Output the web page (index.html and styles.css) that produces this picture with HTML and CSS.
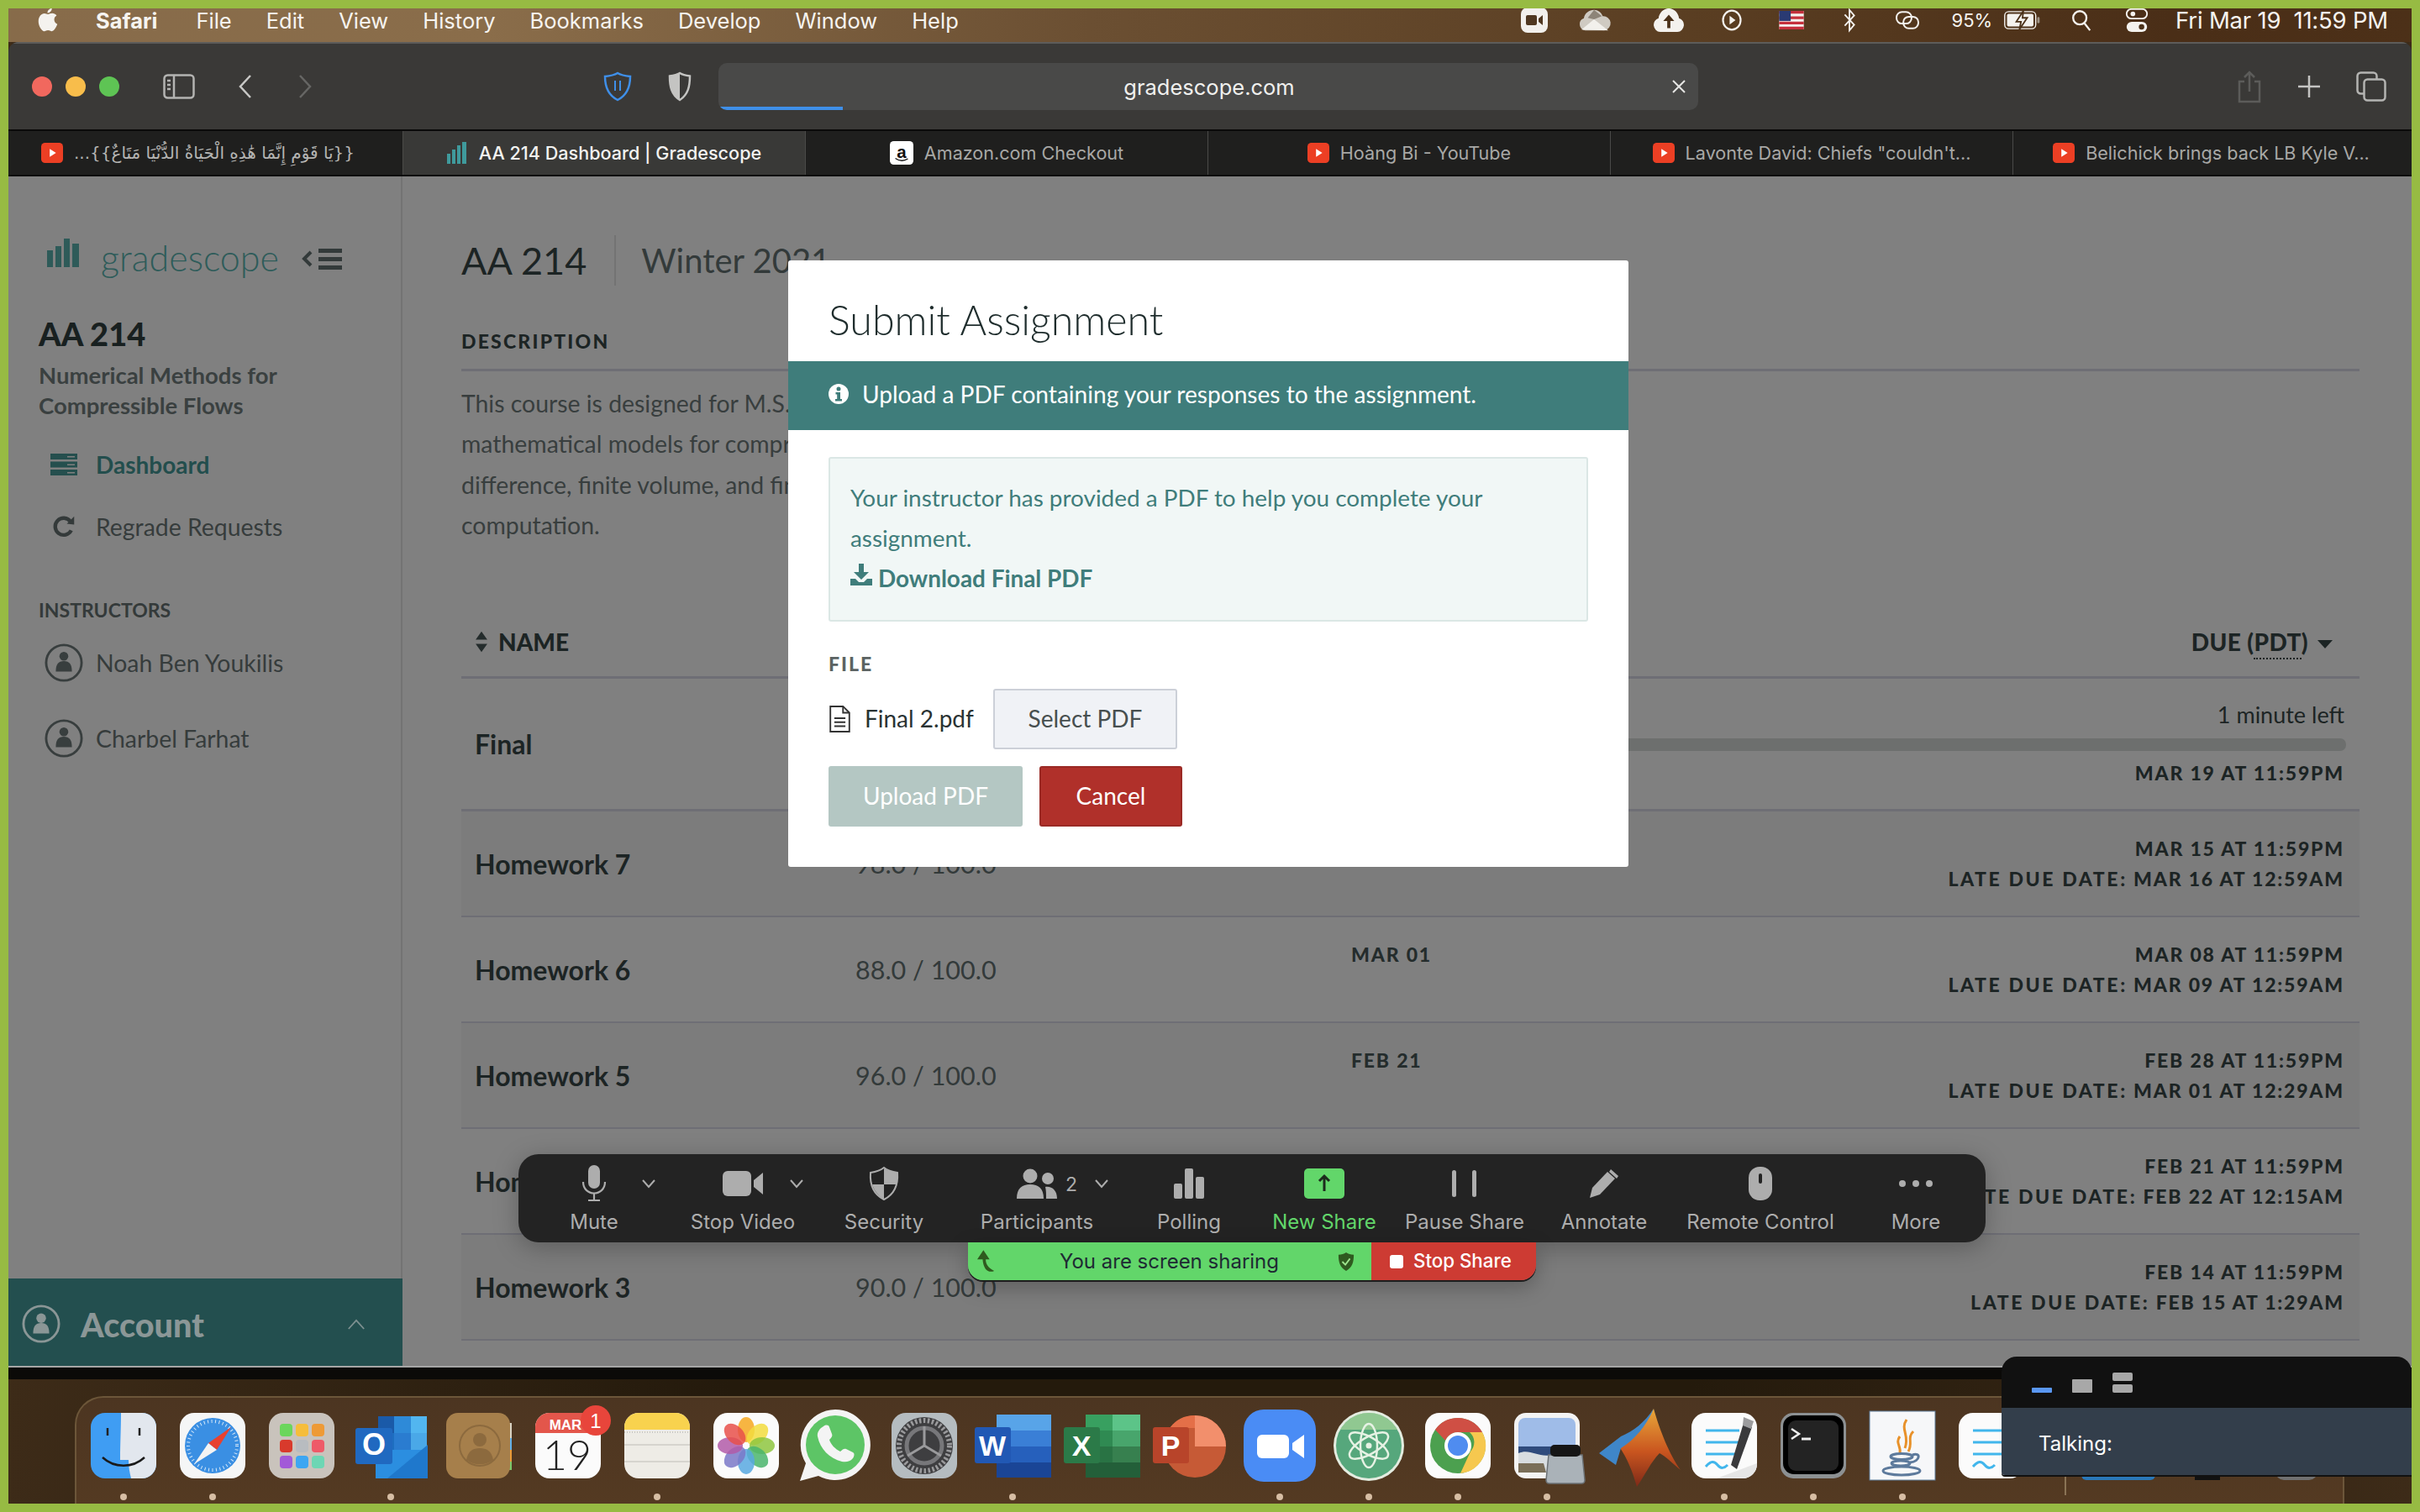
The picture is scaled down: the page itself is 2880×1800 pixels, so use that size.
FILE: index.html
```html
<!DOCTYPE html>
<html lang="en">
<head>
<meta charset="utf-8">
<title>AA 214 Dashboard | Gradescope</title>
<link rel="stylesheet" href="styles.css">
</head>
<body>
<div class="screen">
  <header class="menubar">
    <svg class="apple" viewBox="0 0 26 32"><path d="M18 1c.3 3-2.600 6.200-5.500 6-.4-3 2.700-6 5.500-6zM13 8.500c1.500 0 3-1.300 5.500-1.300 2 0 4.200 1 5.600 3-4.600 2.600-3.800 9 .9 10.900-1.200 3.200-4 8.900-7 8.900-1.800 0-2.600-1.200-4.800-1.200s-3 1.200-4.800 1.200C5 30 1 23 1 17.500c0-6 3.800-10 7.500-10 2 0 3.300 1 4.500 1z" fill="#f4f2ee"/></svg>
    <nav class="menus">
      <span class="menu-app">Safari</span><span>File</span><span>Edit</span><span>View</span><span>History</span><span>Bookmarks</span><span>Develop</span><span>Window</span><span>Help</span>
    </nav>
    <div class="status">
      <svg class="st st-zoom" viewBox="0 0 32 32"><rect width="32" height="30" y="1" rx="8" fill="#f2f0ec"/><rect x="6" y="10" width="13" height="12" rx="2" fill="#4f3720"/><path d="M21 14l5-4v12l-5-4z" fill="#4f3720"/></svg>
      <svg class="st st-cloud" viewBox="0 0 42 30"><path d="M9 28a8 8 0 0 1-2-15.500C8 6 14 2 20 2c5 0 9 3 11 8a9 9 0 0 1 2 18z" fill="#cfcac2"/><path d="M4 27L20 14l18 14z" fill="#f2f0ec"/><path d="M20 2l-8 10 8 2 10-4z" fill="#8d8478"/></svg>
      <svg class="st st-up" viewBox="0 0 42 32"><path d="M10 31a9 9 0 0 1-2-17.500C9 6 15 1 21 1s12 5 13 12.500A9 9 0 0 1 32 31z" fill="#f4f2ee"/><path d="M21 9l7 8h-5v9h-4v-9h-5z" fill="#4b3119"/></svg>
      <svg class="st st-play" viewBox="0 0 28 32"><ellipse cx="14" cy="16" rx="12" ry="13" fill="none" stroke="#f4f2ee" stroke-width="2.500"/><path d="M11 10l8 6-8 6z" fill="#f4f2ee"/></svg>
      <svg class="st st-flag" viewBox="0 0 32 24"><rect width="32" height="24" fill="#f4f2ee"/><path d="M0 0h32v3.500H0zM0 7h32v3.500H0zM0 14h32v3.500H0zM0 20.500h32V24H0z" fill="#c5303c"/><rect width="15" height="13" fill="#2a3a73"/></svg>
      <svg class="st st-bt" viewBox="0 0 18 32"><path d="M3 9l12 13-6 7V3l6 7L3 23" fill="none" stroke="#f4f2ee" stroke-width="2"/></svg>
      <svg class="st st-link" viewBox="0 0 36 32"><rect x="2" y="4" width="22" height="17" rx="8" fill="none" stroke="#f4f2ee" stroke-width="2.500"/><rect x="12" y="11" width="22" height="17" rx="8" fill="none" stroke="#f4f2ee" stroke-width="2.500"/></svg>
      <span class="st-pct">95%</span>
      <svg class="st st-bat" viewBox="0 0 48 26"><rect x="1" y="2" width="40" height="22" rx="5" fill="none" stroke="#f4f2ee" stroke-width="1.500"/><rect x="4" y="5" width="34" height="16" rx="2" fill="#f4f2ee"/><path d="M25 1l-9 14h6l-2 10 10-15h-6z" fill="#f4f2ee" stroke="#4b3119" stroke-width="2"/><rect x="43" y="9" width="3" height="8" rx="1.500" fill="#a09587"/></svg>
      <svg class="st st-search" viewBox="0 0 26 30"><circle cx="11" cy="12" r="8.500" fill="none" stroke="#f4f2ee" stroke-width="2.500"/><path d="M17 19l7 9" stroke="#f4f2ee" stroke-width="2.500"/></svg>
      <svg class="st st-ctrl" viewBox="0 0 30 32"><rect x="2" y="2" width="26" height="12" rx="6" fill="none" stroke="#f4f2ee" stroke-width="2"/><circle cx="10" cy="8" r="3" fill="#f4f2ee"/><rect x="2" y="18" width="26" height="13" rx="6.500" fill="#f4f2ee"/><circle cx="21" cy="24.500" r="3.500" fill="#4b3119"/></svg>
      <span class="st-clock">Fri Mar 19&nbsp;&nbsp;11:59 PM</span>
    </div>
  </header>

  <div class="window">
    <div class="toolbar">
      <div class="lights"><i class="lt lt-r"></i><i class="lt lt-y"></i><i class="lt lt-g"></i></div>
      <svg class="tb-side" viewBox="0 0 38 30"><rect x="1.500" y="1.500" width="35" height="27" rx="4" fill="none" stroke="#b4b4b2" stroke-width="2.500"/><path d="M13 2v26" stroke="#b4b4b2" stroke-width="2.500"/><path d="M5 8h4M5 13h4M5 18h4" stroke="#b4b4b2" stroke-width="2.500"/></svg>
      <svg class="tb-back" viewBox="0 0 18 30"><path d="M15 2L3 15l12 13" fill="none" stroke="#c8c8c6" stroke-width="2.500"/></svg>
      <svg class="tb-fwd" viewBox="0 0 18 30"><path d="M3 2l12 13L3 28" fill="none" stroke="#666664" stroke-width="2.500"/></svg>
      <svg class="tb-shield1" viewBox="0 0 36 36"><path d="M18 2c5 3 10 3.500 15 4 0 12-3 22-15 28C6 28 3 18 3 6c5-.5 10-1 15-4z" fill="none" stroke="#3f8fe8" stroke-width="2.500"/><path d="M15 11v12M21 11v12" stroke="#3f8fe8" stroke-width="2"/></svg>
      <svg class="tb-shield2" viewBox="0 0 30 36"><path d="M15 2c4 2.500 8 3 12 3.500 0 12-2 22-12 28.500C5 28 3 18 3 5.500 7 5 11 4.500 15 2z" fill="none" stroke="#c4c4c2" stroke-width="2.500"/><path d="M15 2C11 4.500 7 5 3 5.500 3 18 5 28 15 34z" fill="#c4c4c2"/></svg>
      <div class="address">
        <span class="addr-text">gradescope.com</span>
        <svg class="addr-x" viewBox="0 0 20 20"><path d="M3 3l14 14M17 3L3 17" stroke="#e6e6e4" stroke-width="2"/></svg>
        <i class="addr-progress"></i>
      </div>
      <svg class="tb-share" viewBox="0 0 30 40"><path d="M9 14H3v24h24V14h-6M15 26V3M9 9l6-6 6 6" fill="none" stroke="#5c5c5a" stroke-width="2.500"/></svg>
      <svg class="tb-plus" viewBox="0 0 28 28"><path d="M14 1v26M1 14h26" stroke="#c4c4c2" stroke-width="2.500"/></svg>
      <svg class="tb-tabs" viewBox="0 0 36 36"><rect x="1.500" y="1.500" width="23" height="25" rx="4" fill="none" stroke="#b4b4b2" stroke-width="2.500"/><rect x="9.500" y="9.500" width="25" height="25" rx="4" fill="#3a3937" stroke="#b4b4b2" stroke-width="2.500"/></svg>
    </div>

    <div class="tabs">
      <div class="tab tab-first">
        <svg class="yt" viewBox="0 0 28 28"><rect y="1" width="28" height="26" rx="5" fill="#ec3f24"/><path d="M11 9l8 5-8 5z" fill="#fff"/></svg>
        <span class="tab-ar" dir="rtl">{{يَا قَوْمِ إِنَّمَا هَٰذِهِ الْحَيَاةُ الدُّنْيَا مَتَاعٌ}}...</span>
      </div>
      <div class="tab tab-active">
        <svg class="gs-mini" viewBox="0 0 24 26"><path d="M0 14h4v12H0zM6 9h4v17H6zM12 4h4v22h-4zM18 0h5v26h-5z" fill="#3f9a9c"/></svg>
        <span>AA 214 Dashboard | Gradescope</span>
      </div>
      <div class="tab">
        <svg class="amz" viewBox="0 0 30 30"><rect width="30" height="30" rx="5" fill="#fff"/><text x="15" y="21" text-anchor="middle" class="amz-t">a</text><path d="M7 22c5 3.500 11 3.500 16 .5" fill="none" stroke="#111" stroke-width="1.500"/></svg>
        <span>Amazon.com Checkout</span>
      </div>
      <div class="tab">
        <svg class="yt" viewBox="0 0 28 28"><rect y="1" width="28" height="26" rx="5" fill="#ec3f24"/><path d="M11 9l8 5-8 5z" fill="#fff"/></svg>
        <span>Hoàng Bi - YouTube</span>
      </div>
      <div class="tab">
        <svg class="yt" viewBox="0 0 28 28"><rect y="1" width="28" height="26" rx="5" fill="#ec3f24"/><path d="M11 9l8 5-8 5z" fill="#fff"/></svg>
        <span>Lavonte David: Chiefs "couldn't...</span>
      </div>
      <div class="tab tab-last">
        <svg class="yt" viewBox="0 0 28 28"><rect y="1" width="28" height="26" rx="5" fill="#ec3f24"/><path d="M11 9l8 5-8 5z" fill="#fff"/></svg>
        <span>Belichick brings back LB Kyle V...</span>
      </div>
    </div>

    <div class="content">
      <aside class="sidebar">
        <div class="logo-row">
          <svg class="logo-bars" viewBox="0 0 38 34"><path d="M0 14h7v20H0zM10 9h7v25h-7zM20 0h7v34h-7zM30 6h8v28h-8z" fill="#2e5b59"/></svg>
          <span class="logo-text">gradescope</span>
          <svg class="logo-toggle" viewBox="0 0 50 30"><path d="M12 7l-8 8 8 8" fill="none" stroke="#333a3a" stroke-width="4"/><path d="M21 3h28v5H21zM21 13h28v5H21zM21 23h28v5H21z" fill="#333a3a"/></svg>
        </div>
        <h1 class="course-num">AA 214</h1>
        <p class="course-name">Numerical Methods for Compressible Flows</p>
        <nav class="side-nav">
          <div class="nav-item nav-active">
            <svg class="nav-ico" viewBox="0 0 32 26"><path d="M0 0h32v7H0zM0 9.500h32v7H0zM0 19h32v7H0z" fill="#254f4e"/><path d="M20 3h9v1.500h-9zM20 12.500h9v1.500h-9zM20 22h9v1.500h-9z" fill="#808080"/></svg>
            <span>Dashboard</span>
          </div>
          <div class="nav-item">
            <svg class="nav-ico" viewBox="0 0 32 32"><path d="M26 21a11.500 11.500 0 1 1-1-12" fill="none" stroke="#343a3a" stroke-width="5"/><path d="M20 12L30 13V2z" fill="#343a3a"/></svg>
            <span>Regrade Requests</span>
          </div>
        </nav>
        <h2 class="side-label">INSTRUCTORS</h2>
        <div class="person">
          <svg class="person-ico" viewBox="0 0 48 48"><circle cx="24" cy="24" r="22" fill="none" stroke="#383e3e" stroke-width="3"/><circle cx="24" cy="16" r="5.500" fill="#383e3e"/><path d="M14 35c0-9 3-13 10-13s10 4 10 13z" fill="#383e3e"/></svg>
          <span>Noah Ben Youkilis</span>
        </div>
        <div class="person">
          <svg class="person-ico" viewBox="0 0 48 48"><circle cx="24" cy="24" r="22" fill="none" stroke="#383e3e" stroke-width="3"/><circle cx="24" cy="16" r="5.500" fill="#383e3e"/><path d="M14 35c0-9 3-13 10-13s10 4 10 13z" fill="#383e3e"/></svg>
          <span>Charbel Farhat</span>
        </div>
        <div class="account">
          <svg class="acct-ico" viewBox="0 0 48 48"><circle cx="24" cy="24" r="22" fill="none" stroke="#8a9696" stroke-width="3"/><circle cx="24" cy="17" r="6" fill="#8a9696"/><path d="M14 36c0-9 3-13 10-13s10 4 10 13z" fill="#8a9696"/></svg>
          <span class="acct-text">Account</span>
          <svg class="acct-chev" viewBox="0 0 24 14"><path d="M2 13L12 2l10 11" fill="none" stroke="#7d9090" stroke-width="2"/></svg>
        </div>
      </aside>

      <main class="main">
        <div class="course-head">
          <span class="head-num">AA 214</span>
          <span class="head-term">Winter 2021</span>
        </div>
        <h3 class="desc-label">DESCRIPTION</h3>
        <p class="desc">This course is designed for M.S. students and covers the<br>mathematical models for compressible flows, including finite<br>difference, finite volume, and finite element methods for<br>computation.</p>
        <div class="thead">
          <div class="th-name">
            <svg class="sort" viewBox="0 0 18 30"><path d="M9 1l8 11H1zM9 29l8-11H1z" fill="#242c2c"/></svg>
            <span>NAME</span>
          </div>
          <div class="th-due">
            <span>DUE (<span class="abbr">PDT</span>)</span>
            <svg class="caret" viewBox="0 0 18 10"><path d="M0 0h18L9 10z" fill="#1c2424"/></svg>
          </div>
        </div>

        <div class="row row-first">
          <div class="r-name">Final</div>
          <div class="r-due r-due-wide">
            <div class="left-text">1 minute left</div>
            <div class="bar"></div>
            <div class="due-final">MAR 19 AT 11:59PM</div>
          </div>
        </div>
        <div class="row row-alt">
          <div class="r-name">Homework 7</div>
          <div class="r-grade">98.0 / 100.0</div>
          <div class="r-rel"></div>
          <div class="r-due"><div>MAR 15 AT 11:59PM</div><div><span class="late">LATE DUE DATE:</span> MAR 16 AT 12:59AM</div></div>
        </div>
        <div class="row">
          <div class="r-name">Homework 6</div>
          <div class="r-grade">88.0 / 100.0</div>
          <div class="r-rel">MAR 01</div>
          <div class="r-due"><div>MAR 08 AT 11:59PM</div><div><span class="late">LATE DUE DATE:</span> MAR 09 AT 12:59AM</div></div>
        </div>
        <div class="row row-alt">
          <div class="r-name">Homework 5</div>
          <div class="r-grade">96.0 / 100.0</div>
          <div class="r-rel">FEB 21</div>
          <div class="r-due"><div>FEB 28 AT 11:59PM</div><div><span class="late">LATE DUE DATE:</span> MAR 01 AT 12:29AM</div></div>
        </div>
        <div class="row">
          <div class="r-name">Homework 4</div>
          <div class="r-grade">95.0 / 100.0</div>
          <div class="r-rel">FEB 14</div>
          <div class="r-due"><div>FEB 21 AT 11:59PM</div><div><span class="late">LATE DUE DATE:</span> FEB 22 AT 12:15AM</div></div>
        </div>
        <div class="row row-alt">
          <div class="r-name">Homework 3</div>
          <div class="r-grade">90.0 / 100.0</div>
          <div class="r-rel"></div>
          <div class="r-due"><div>FEB 14 AT 11:59PM</div><div><span class="late">LATE DUE DATE:</span> FEB 15 AT 1:29AM</div></div>
        </div>
      </main>
    </div>
  </div>

  <div class="behind"></div>

  <footer class="dock">
    <div class="app"><svg viewBox="0 0 78 78"><defs><clipPath id="fc"><rect width="78" height="78" rx="17"/></clipPath></defs><g clip-path="url(#fc)"><rect width="78" height="78" fill="#3f9df3"/><path d="M36 0h42v78H48c-2-8-3-14-3-22h-10c0-20 1-36 1-56z" fill="#e2e7ee"/></g><path d="M20 18v9M58 18v9" stroke="#222" stroke-width="2.500"/><path d="M14 53c14 13 36 13 50 0" fill="none" stroke="#1a1a1a" stroke-width="2.500"/></svg><i class="dot"></i></div>
    <div class="app"><svg viewBox="0 0 78 78"><rect width="78" height="78" rx="17" fill="#f5f6f6"/><circle cx="39" cy="39" r="33" fill="#3a8fe3"/><circle cx="39" cy="39" r="29" fill="none" stroke="#d6e8f8" stroke-width="4" stroke-dasharray="1 3.500"/><path d="M61 17L34 36l10 8z" fill="#e8412f"/><path d="M17 61l27-17-10-8z" fill="#f3f3f3"/></svg><i class="dot"></i></div>
    <div class="app"><svg viewBox="0 0 78 78"><rect width="78" height="78" rx="17" fill="#c9c3bc"/><rect x="13" y="13" width="15" height="15" rx="4" fill="#6bd65c"/><rect x="32" y="13" width="15" height="15" rx="4" fill="#f6bd3a"/><rect x="51" y="13" width="15" height="15" rx="4" fill="#ee9a36"/><rect x="13" y="32" width="15" height="15" rx="4" fill="#d83a2c"/><rect x="32" y="32" width="15" height="15" rx="4" fill="#b8bcc0"/><rect x="51" y="32" width="15" height="15" rx="4" fill="#ee5a68"/><rect x="13" y="51" width="15" height="15" rx="4" fill="#a25ad8"/><rect x="32" y="51" width="15" height="15" rx="4" fill="#3da6f2"/><rect x="51" y="51" width="15" height="15" rx="4" fill="#6dd6b4"/></svg><i class="dot off"></i></div>
    <div class="app"><svg viewBox="0 0 78 78"><path d="M24 4h58v40H24z" fill="#1e64b4"/><path d="M24 4h19v20H24z" fill="#1a5aa8"/><path d="M43 4h20v20H43z" fill="#2e8ad8"/><path d="M63 4h19v20H63z" fill="#52b6f0"/><path d="M24 24h19v20H24z" fill="#1e6ec0"/><path d="M43 24h20v20H43z" fill="#2a7cd0"/><path d="M63 24h19v20H63z" fill="#4aa8e8"/><path d="M21 44h62v34H21z" fill="#2b8ee0"/><path d="M83 38v40H35z" fill="#1f78cc"/><rect x="-3" y="18" width="44" height="43" rx="3" fill="#2069c0"/><text x="19" y="50" text-anchor="middle" class="dk-o">O</text></svg><i class="dot"></i></div>
    <div class="app"><svg viewBox="0 0 78 78"><rect x="68" y="12" width="10" height="18" fill="#d8d2c4"/><rect x="68" y="30" width="10" height="14" fill="#62b0e8"/><rect x="68" y="44" width="10" height="14" fill="#ea9b38"/><rect x="68" y="58" width="10" height="10" fill="#7cc86a"/><rect width="76" height="78" rx="14" fill="#a67f4b"/><circle cx="40" cy="39" r="24" fill="none" stroke="#8c6a3e" stroke-width="2"/><circle cx="40" cy="32" r="8" fill="#8c6a3e"/><path d="M24 56c2-11 8-14 16-14s14 3 16 14c-9 7-23 7-32 0z" fill="#8c6a3e"/></svg><i class="dot off"></i></div>
    <div class="app"><svg viewBox="0 0 78 78"><rect width="78" height="78" rx="17" fill="#fbfbfb"/><path d="M0 24V17A17 17 0 0 1 17 0h44a17 17 0 0 1 17 17v7z" fill="#e3564b"/><text x="36" y="20" text-anchor="middle" class="dk-mar">MAR</text><text x="38" y="68" text-anchor="middle" class="dk-19">19</text><circle cx="72" cy="9" r="18" fill="#e8453b"/><text x="72" y="18" text-anchor="middle" class="dk-badge">1</text></svg><i class="dot off"></i></div>
    <div class="app"><svg viewBox="0 0 78 78"><rect width="78" height="78" rx="17" fill="#eeece6"/><path d="M0 20V17A17 17 0 0 1 17 0h44a17 17 0 0 1 17 17v3z" fill="#f8d24e"/><path d="M0 38h78M0 58h78" stroke="#d6d4ce" stroke-width="2"/><path d="M0 23h78" stroke="#bbb" stroke-width="1.500" stroke-dasharray="1 2"/></svg><i class="dot"></i></div>
    <div class="app"><svg viewBox="0 0 78 78"><rect width="78" height="78" rx="17" fill="#fbfbfb"/><g><ellipse cx="39" cy="20" rx="10" ry="15" fill="#f6a821" opacity=".85"/><ellipse cx="39" cy="20" rx="10" ry="15" fill="#f2dc3e" opacity=".85" transform="rotate(45 39 39)"/><ellipse cx="39" cy="20" rx="10" ry="15" fill="#8ec63f" opacity=".85" transform="rotate(90 39 39)"/><ellipse cx="39" cy="20" rx="10" ry="15" fill="#4ab56c" opacity=".85" transform="rotate(135 39 39)"/><ellipse cx="39" cy="20" rx="10" ry="15" fill="#58a8e0" opacity=".85" transform="rotate(180 39 39)"/><ellipse cx="39" cy="20" rx="10" ry="15" fill="#7a78c8" opacity=".85" transform="rotate(225 39 39)"/><ellipse cx="39" cy="20" rx="10" ry="15" fill="#b25aa8" opacity=".85" transform="rotate(270 39 39)"/><ellipse cx="39" cy="20" rx="10" ry="15" fill="#e8504a" opacity=".85" transform="rotate(315 39 39)"/></g></svg><i class="dot off"></i></div>
    <div class="app"><svg viewBox="0 0 78 78"><path d="M39-4a42 42 0 1 1-20 79L-3 81l7-21A42 42 0 0 1 39-4z" fill="#f4f4f4"/><circle cx="39" cy="38" r="35" fill="#5dc566"/><path d="M25 16c3-2 6-2 7 1l3 8c1 2 0 4-3 7 2 6 7 11 13 14 3-3 5-4 7-3l8 4c2 1 2 4 0 7-3 4-8 5-13 4-15-4-26-15-29-30-1-5 3-10 7-12z" fill="#f4f4f4"/></svg><i class="dot off"></i></div>
    <div class="app"><svg viewBox="0 0 78 78"><rect width="78" height="78" rx="17" fill="#b5bcc0"/><circle cx="39" cy="39" r="34" fill="#3e3e40"/><circle cx="39" cy="39" r="30" fill="none" stroke="#9a9a9c" stroke-width="6" stroke-dasharray="2.500 2.500"/><circle cx="39" cy="39" r="21" fill="none" stroke="#77777a" stroke-width="5"/><path d="M39 39V16M39 39L19 51M39 39l20 12" stroke="#9a9a9c" stroke-width="3"/></svg><i class="dot off"></i></div>
    <div class="app"><svg viewBox="0 0 78 78"><path d="M20 2h65v19H20z" fill="#58a4e8"/><path d="M20 21h65v19H20z" fill="#3a7fd6"/><path d="M20 40h65v19H20z" fill="#2660bc"/><path d="M20 59h65v18H20z" fill="#1a4596"/><rect x="-6" y="17" width="43" height="43" rx="3" fill="#2158b4"/><text x="15" y="51" text-anchor="middle" class="dk-l">W</text></svg><i class="dot"></i></div>
    <div class="app"><svg viewBox="0 0 78 78"><path d="M20 2h65v19H20z" fill="#38a060"/><path d="M52 2h33v19H52z" fill="#5cc488"/><path d="M20 21h65v19H20z" fill="#2f8a52"/><path d="M52 21h33v19H52z" fill="#48a56c"/><path d="M20 40h65v19H20z" fill="#297344"/><path d="M52 40h33v19H52z" fill="#37804f"/><path d="M20 59h65v18H20z" fill="#235f39"/><rect x="-6" y="17" width="43" height="43" rx="3" fill="#2b7a48"/><text x="15" y="51" text-anchor="middle" class="dk-l">X</text></svg><i class="dot off"></i></div>
    <div class="app"><svg viewBox="0 0 78 78"><ellipse cx="44" cy="40" rx="37" ry="37" fill="#c65a36"/><path d="M44 3a37 37 0 0 1 37 37H44z" fill="#f28f6c"/><path d="M44 3a37 37 0 0 0-30 15h30z" fill="#e46f48"/><rect x="-6" y="17" width="43" height="43" rx="3" fill="#b8442a"/><text x="15" y="51" text-anchor="middle" class="dk-l">P</text></svg><i class="dot off"></i></div>
    <div class="app"><svg viewBox="0 0 78 78"><rect x="-4" y="-4" width="86" height="86" rx="24" fill="#4a8cf5"/><rect x="12" y="26" width="38" height="28" rx="6" fill="#fff"/><path d="M54 36l14-10v28L54 44z" fill="#fff"/></svg><i class="dot"></i></div>
    <div class="app"><svg viewBox="0 0 78 78"><circle cx="39" cy="39" r="42" fill="#e4ece0"/><circle cx="39" cy="39" r="39" fill="#56a77c"/><path d="M39 0a39 39 0 0 1 34 20H5A39 39 0 0 1 39 0z" fill="#a9d69a" opacity=".7"/><g fill="none" stroke="#e6f2e4" stroke-width="2.500"><ellipse cx="39" cy="39" rx="26" ry="10" transform="rotate(30 39 39)"/><ellipse cx="39" cy="39" rx="26" ry="10" transform="rotate(90 39 39)"/><ellipse cx="39" cy="39" rx="26" ry="10" transform="rotate(150 39 39)"/></g><circle cx="39" cy="39" r="3.500" fill="#e6f2e4"/></svg><i class="dot"></i></div>
    <div class="app"><svg viewBox="0 0 78 78"><rect width="78" height="78" rx="17" fill="#fbfbfb"/><circle cx="39" cy="39" r="33" fill="#4ca04f"/><path d="M39 6a33 33 0 0 1 29 17H39a16 16 0 0 0-15 10L12 20A33 33 0 0 1 39 6z" fill="#cf4f44"/><path d="M68 23a33 33 0 0 1-26 49l12-26a16 16 0 0 0-1-23z" fill="#f6c84f"/><circle cx="39" cy="39" r="16" fill="#fff"/><circle cx="39" cy="39" r="12" fill="#4f8cf0"/></svg><i class="dot"></i></div>
    <div class="app"><svg viewBox="0 0 78 78"><rect width="78" height="78" rx="14" fill="#f3f3f3"/><rect x="5" y="6" width="68" height="65" rx="8" fill="#9fbce8"/><path d="M5 40h68v31H5z" fill="#2f4b7c"/><path d="M5 48c14-6 24 6 40 2v21H5z" fill="#d8dde0"/><path d="M5 60l30 0 3 11H5z" fill="#7a6e58"/><path d="M41 50h40l3 30q0 4-4 4H42q-4 0-4-4z" fill="#aab2b8" stroke="#6c7276" stroke-width="1.500"/><rect x="43" y="38" width="36" height="14" rx="5" fill="#161616"/></svg><i class="dot"></i></div>
    <div class="app"><svg viewBox="0 0 78 78"><defs><linearGradient id="mlg" x1="0" y1="0" x2="0" y2="1"><stop offset="0" stop-color="#e9a83a"/><stop offset=".55" stop-color="#c9551f"/><stop offset="1" stop-color="#7e2a18"/></linearGradient></defs><g transform="translate(8 0)"><path d="M53-5C60 20 72 50 85 68 75 60 68 52 60 48 50 58 42 75 33 88 28 70 22 55 12 40 28 30 42 15 53-5z" fill="url(#mlg)"/><path d="M-12 48L14 28C28 22 42 12 53-5 44 16 30 32 14 42L8 62z" fill="#3f86c8"/></g></svg><i class="dot off"></i></div>
    <div class="app"><svg viewBox="0 0 78 78"><rect width="78" height="78" rx="17" fill="#fbfbfb"/><path d="M78 60V61A17 17 0 0 1 61 78H30z" fill="#e6e6e6"/><path d="M17 21h40M17 35h40M17 49h40" stroke="#41b6ec" stroke-width="3"/><path d="M17 64c6-7 10-7 14-2s8 4 12 0" fill="none" stroke="#41b6ec" stroke-width="3"/><path d="M47 62l15-50 10 5-18 50z" fill="#3a3a3c"/><path d="M62 5l12 5-3 9-10-4z" fill="#9c9c9e"/></svg><i class="dot"></i></div>
    <div class="app"><svg viewBox="0 0 78 78"><rect width="78" height="78" rx="15" fill="#8c9092"/><rect x="3" y="3" width="72" height="70" rx="13" fill="#000"/><rect x="9" y="9" width="60" height="60" rx="9" fill="#232323"/><path d="M13 19l9 6-9 6" fill="none" stroke="#eee" stroke-width="2.500"/><path d="M25 31h11" stroke="#eee" stroke-width="3"/></svg><i class="dot"></i></div>
    <div class="app"><svg viewBox="0 0 78 78"><rect x="0" y="-2" width="78" height="82" fill="#f6f7f9" stroke="#5f7c9a" stroke-width="1"/><path d="M44 8c-8 12 4 18-2 34M52 22c-8 8 0 14-6 24M36 28c-6 8 2 12 0 20" fill="none" stroke="#e8912a" stroke-width="3"/><g fill="none" stroke="#5d7a9c" stroke-width="3"><ellipse cx="38" cy="52" rx="13" ry="3.500"/><ellipse cx="37" cy="60" rx="11" ry="3"/><ellipse cx="38" cy="69" rx="22" ry="5"/><path d="M51 50c10-4 10 8-3 9"/></g></svg><i class="dot"></i></div>
    <div class="app"><svg viewBox="0 0 78 78"><rect width="78" height="78" rx="17" fill="#fbfbfb"/><path d="M17 21h40M17 35h40M17 49h40" stroke="#41b6ec" stroke-width="3"/><path d="M17 64c6-7 10-7 14-2s8 4 12 0" fill="none" stroke="#41b6ec" stroke-width="3"/></svg><i class="dot off"></i></div>
    <i class="dock-sep"></i>
    <div class="app app-hid"><i class="hid-blue"></i></div>
    <div class="app app-hid"><i class="hid-black"></i></div>
    <div class="app app-hid"><i class="hid-gray"></i></div>
  </footer>

  <section class="modal">
    <h2 class="modal-title">Submit Assignment</h2>
    <div class="modal-banner">
      <svg class="info-ico" viewBox="0 0 24 24"><circle cx="12" cy="12" r="12" fill="#fff"/><circle cx="12" cy="6" r="2.500" fill="#3f7d7b"/><path d="M8.500 10h5.500v8h2v2.500H8v-2.500h2.200v-5.500H8.500z" fill="#3f7d7b"/></svg>
      <span>Upload a PDF containing your responses to the assignment.</span>
    </div>
    <div class="modal-body">
      <div class="notice">
        <p>Your instructor has provided a PDF to help you complete your assignment.</p>
        <a class="dl">
          <svg class="dl-ico" viewBox="0 0 26 26"><path d="M10 0h6v10h6l-9 9-9-9h6z" fill="#3f7d7b"/><path d="M0 18h6l4 4h6l4-4h6v8H0z" fill="#3f7d7b"/></svg>
          <span>Download Final PDF</span>
        </a>
      </div>
      <h4 class="file-label">FILE</h4>
      <div class="file-row">
        <svg class="doc-ico" viewBox="0 0 28 34"><path d="M2 1h16l8 8v24H2z" fill="none" stroke="#333" stroke-width="2"/><path d="M18 1v8h8M7 16h14M7 21h14M7 26h14" fill="none" stroke="#333" stroke-width="2"/></svg>
        <span class="file-name">Final 2.pdf</span>
        <button class="btn btn-select">Select PDF</button>
      </div>
      <div class="btn-row">
        <button class="btn btn-upload">Upload PDF</button>
        <button class="btn btn-cancel">Cancel</button>
      </div>
    </div>
  </section>

  <section class="zoombar">
    <div class="zitem">
      <div class="zi"><svg class="z-mic" viewBox="0 0 30 44"><rect x="8" y="0" width="14" height="28" rx="7" fill="#adadad"/><path d="M2 20c0 18 26 18 26 0M15 34v8M8 42h14" fill="none" stroke="#adadad" stroke-width="2.200"/></svg><svg class="z-chev" viewBox="0 0 16 10"><path d="M1 1l7 8 7-8" fill="none" stroke="#adadad" stroke-width="2"/></svg></div>
      <span>Mute</span>
    </div>
    <div class="zitem">
      <div class="zi"><svg class="z-vid" viewBox="0 0 48 30"><rect width="34" height="30" rx="6" fill="#adadad"/><path d="M37 11l11-9v26l-11-9z" fill="#adadad"/></svg><svg class="z-chev z-chev-v" viewBox="0 0 16 10"><path d="M1 1l7 8 7-8" fill="none" stroke="#adadad" stroke-width="2"/></svg></div>
      <span>Stop Video</span>
    </div>
    <div class="zitem">
      <div class="zi"><svg class="z-sec" viewBox="0 0 36 42"><path d="M18 2c5 4 10 5 16 6 1 14-4 26-16 32C6 34 1 22 2 8c6-1 11-2 16-6z" fill="none" stroke="#adadad" stroke-width="2"/><path d="M18 3v19h15c1-5 1-10 1-14-6-1-11-2-16-5zM18 22H4c2 7 7 13 14 18z" fill="#adadad"/></svg></div>
      <span>Security</span>
    </div>
    <div class="zitem">
      <div class="zi"><div class="z-part"><svg class="z-ppl" viewBox="0 0 48 36"><circle cx="16" cy="9" r="8.500" fill="#adadad"/><circle cx="37" cy="12" r="7" fill="#adadad"/><path d="M0 36c0-12 6-17 16-17s16 5 16 17z" fill="#adadad"/><path d="M34 22c8-1 14 4 14 14H35c0-5 0-10-1-14z" fill="#adadad"/></svg><b class="z-num">2</b></div><svg class="z-chev z-chev-p" viewBox="0 0 16 10"><path d="M1 1l7 8 7-8" fill="none" stroke="#adadad" stroke-width="2"/></svg></div>
      <span>Participants</span>
    </div>
    <div class="zitem">
      <div class="zi"><svg class="z-poll" viewBox="0 0 36 36"><rect y="18" width="10" height="18" rx="2" fill="#adadad"/><rect x="13" width="10" height="36" rx="2" fill="#adadad"/><rect x="26" y="10" width="10" height="26" rx="2" fill="#adadad"/></svg></div>
      <span>Polling</span>
    </div>
    <div class="zitem z-green">
      <div class="zi"><svg class="z-new" viewBox="0 0 48 36"><rect width="48" height="36" rx="5" fill="#62d66a"/><path d="M24 27V10M18 15l6-6 6 6" fill="none" stroke="#1d2a1d" stroke-width="3"/></svg></div>
      <span>New Share</span>
    </div>
    <div class="zitem">
      <div class="zi"><svg class="z-pause" viewBox="0 0 30 32"><rect width="5" height="32" rx="2.500" fill="#adadad"/><rect x="24" width="5" height="32" rx="2.500" fill="#adadad"/></svg></div>
      <span>Pause Share</span>
    </div>
    <div class="zitem">
      <div class="zi"><svg class="z-ann" viewBox="0 0 36 36"><path d="M1 35l3-12L22 4l9 8-18 19z" fill="#adadad"/><path d="M26 1l9 8-2 3-9-8z" fill="#adadad"/></svg></div>
      <span>Annotate</span>
    </div>
    <div class="zitem">
      <div class="zi"><svg class="z-mouse" viewBox="0 0 28 40"><rect width="28" height="40" rx="13" fill="#adadad"/><rect x="12" y="8" width="4" height="12" rx="2" fill="#232323"/></svg></div>
      <span>Remote Control</span>
    </div>
    <div class="zitem">
      <div class="zi"><svg class="z-more" viewBox="0 0 42 10"><circle cx="5" cy="5" r="4" fill="#adadad"/><circle cx="21" cy="5" r="4" fill="#adadad"/><circle cx="37" cy="5" r="4" fill="#adadad"/></svg></div>
      <span>More</span>
    </div>
  </section>

  <section class="sharebar">
    <div class="share-green">
      <svg class="share-arrow" viewBox="0 0 24 30"><path d="M8 0l8 12h-5c0 6 3 11 11 15-7 3-14-1-15-15H0z" fill="#2f5a1f"/></svg>
      <span class="share-text">You are screen sharing</span>
      <svg class="share-shield" viewBox="0 0 22 26"><path d="M11 1c3 2 6 3 10 3 0 10-2 17-10 21C3 21 1 14 1 4c4 0 7-1 10-3z" fill="#2f5a1f"/><path d="M6 13l4 4 6-8" fill="none" stroke="#9ee58d" stroke-width="2"/></svg>
    </div>
    <div class="share-red"><i class="stop-sq"></i><span>Stop Share</span></div>
  </section>

  <section class="talk">
    <div class="talk-head">
      <i class="t-blue"></i><i class="t-sq"></i>
      <div class="t-stack"><i></i><i></i></div>
    </div>
    <div class="talk-body">Talking:</div>
  </section>
</div>
</body>
</html>
```

FILE: styles.css
```css
* { box-sizing: border-box; }
html, body { margin: 0; padding: 0; }
body { width: 2880px; height: 1800px; background: #97bb43; overflow: hidden; font-family: "Lato", "Liberation Sans", sans-serif; }
svg { display: block; flex: none; overflow: visible; }
h1, h2, h3, h4, p { margin: 0; }
button { font-family: inherit; cursor: default; }

.screen { position: relative; margin: 10px; width: 2860px; height: 1780px; overflow: hidden; display: flex; flex-direction: column;
  background: linear-gradient(90deg, #3d2b18 0%, #241a0c 30%, #241a0c 70%, #3d2b18 100%); }

/* menu bar */
.menubar { height: 40px; flex: none; display: flex; align-items: center; padding: 0 28px 12px 34px; color: #f6f4f0; font-family: "Inter", "Liberation Sans", sans-serif; font-size: 25.500px;
  background: linear-gradient(90deg, #876b4a 0%, #8a6d4a 20%, #6b4f32 45%, #5a3e22 70%, #4a2e17 90%, #4c3018 100%); }
.apple { width: 26px; height: 30px; margin-right: 44px; }
.menus { display: flex; gap: 41px; white-space: nowrap; }
.menu-app { font-weight: 700; margin-right: 5px; }
.status { margin-left: auto; display: flex; align-items: center; }
.st-zoom { width: 32px; height: 32px; }
.st-cloud { width: 40px; height: 28px; margin-left: 36px; }
.st-up { width: 42px; height: 30px; margin-left: 47px; }
.st-play { width: 26px; height: 28px; margin-left: 41px; }
.st-flag { width: 32px; height: 22px; margin-left: 42px; }
.st-bt { width: 18px; height: 30px; margin-left: 44px; }
.st-link { width: 36px; height: 26px; margin-left: 42px; }
.st-pct { margin-left: 34px; font-size: 22px; }
.st-bat { width: 46px; height: 24px; margin-left: 13px; }
.st-search { width: 26px; height: 28px; margin-left: 34px; }
.st-ctrl { width: 30px; height: 30px; margin-left: 38px; }
.st-clock { margin-left: 31px; font-size: 27.500px; letter-spacing: -.2px; white-space: nowrap; }

/* window */
.window { flex: none; height: 1578px; display: flex; flex-direction: column; border-radius: 12px 12px 0 0; overflow: hidden; }
.toolbar { height: 104px; flex: none; display: flex; align-items: center; padding-left: 28px; background: #3a3937; border-top: 2px solid #5d5c5a; }
.lights { display: flex; gap: 16px; }
.lt { display: block; width: 24px; height: 24px; border-radius: 50%; }
.lt-r { background: #f1685e; }
.lt-y { background: #f8bd4b; }
.lt-g { background: #5ec454; }
.tb-side { width: 38px; height: 30px; margin-left: 52px; }
.tb-back { width: 18px; height: 30px; margin-left: 51px; }
.tb-fwd { width: 18px; height: 30px; margin-left: 53px; }
.tb-shield1 { width: 36px; height: 36px; margin-left: 345px; }
.tb-shield2 { width: 30px; height: 36px; margin-left: 41px; }
.address { position: relative; width: 1166px; height: 56px; margin-left: 31px; padding-left: 2px; background: #494948; border-radius: 10px; display: flex; align-items: center; justify-content: center; overflow: hidden; color: #f0f0ee; font-family: "Inter", "Liberation Sans", sans-serif; font-size: 25.500px; }
.addr-x { position: absolute; right: 13px; top: 18px; width: 20px; height: 20px; }
.addr-progress { position: absolute; left: 0; bottom: 0; width: 148px; height: 4px; background: #3f8fe8; }
.tb-share { width: 30px; height: 40px; margin-left: 641px; }
.tb-plus { width: 28px; height: 28px; margin-left: 42px; }
.tb-tabs { width: 36px; height: 36px; margin-left: 42px; }

.tabs { height: 56px; flex: none; display: flex; background: #1f1f1e; border-top: 2px solid #0a0a0a; border-bottom: 2px solid #0a0a0a; font-family: "Inter", "Liberation Sans", sans-serif; font-size: 21.600px; color: #a8a8a6; }
.tab { width: 479px; flex: none; display: flex; align-items: center; justify-content: center; gap: 13px; border-right: 1.500px solid #4a4a48; white-space: nowrap; }
.tab-first { width: 470px; padding-right: 18px; }
.tab-last { border-right: 0; width: 471px; }
.tab-active { background: #393937; color: #f2f2f0; font-weight: 500; gap: 14px; }
.tab-ar { font-family: "DejaVu Sans", sans-serif; font-size: 20px; color: #b4b4b2; }
.yt { width: 26px; height: 26px; }
.amz { width: 28px; height: 28px; }
.amz-t { font: 700 22px "Liberation Sans", sans-serif; fill: #111; }
.gs-mini { width: 24px; height: 26px; }

/* content */
.content { flex: 1; min-height: 0; display: flex; background: #808080; border-bottom: 2px solid #a6a6a6; }
.sidebar { width: 469px; flex: none; display: flex; flex-direction: column; padding-top: 68px; border-right: 2px solid #737373; color: #363c3c; }
.logo-row { height: 60px; display: flex; align-items: center; padding-left: 46px; }
.logo-bars { width: 38px; height: 34px; margin-right: 26px; margin-top: -14px; }
.logo-text { font-size: 43px; font-weight: 300; color: #2e5c5a; line-height: 60px; padding-bottom: 2px; }
.logo-toggle { width: 50px; height: 30px; margin-left: 26px; }
.course-num { margin: 37px 0 0 36px; font-size: 38px; line-height: 44px; font-weight: 900; color: #182020; }
.course-name { margin: 10px 0 0 36px; width: 330px; font-size: 27.500px; line-height: 36px; font-weight: 700; color: #3a4040; }
.side-nav { margin-top: 15px; }
.nav-item { height: 74px; display: flex; align-items: center; font-size: 28.400px; padding-left: 50px; }
.nav-ico { width: 32px; height: 28px; margin-right: 22px; }
.nav-active { color: #234e4d; font-weight: 700; font-size: 28px; }
.side-label { margin: 47px 0 6px 36px; font-size: 23px; line-height: 30px; font-weight: 700; color: #343a3a; }
.person { height: 90px; flex: none; display: flex; align-items: center; padding-left: 43px; font-size: 28.400px; margin-top: -3px; margin-bottom: 3px; }
.person-ico { width: 46px; height: 46px; margin-right: 15px; }
.account { margin-top: auto; height: 104px; flex: none; display: flex; align-items: center; background: #234f4f; margin-right: -2px; padding: 4px 0 0 16px; }
.acct-ico { width: 46px; height: 46px; }
.acct-text { margin-left: 24px; font-size: 39.500px; font-weight: 900; color: #8b9797; }
.acct-chev { width: 22px; height: 13px; margin-left: 170px; }

.main { flex: 1; min-width: 0; padding: 65px 62px 0 70px; color: #1c2424; overflow: hidden; }
.course-head { height: 70px; display: flex; align-items: center; }
.head-num { font-size: 45px; padding-right: 33px; }
.head-term { font-size: 40px; padding: 6px 0 6px 30px; border-left: 2px solid #737373; color: #333a3a; white-space: nowrap; }
.desc-label { margin-top: 46px; padding-bottom: 18px; border-bottom: 3px solid #6e6e75; font-size: 23px; line-height: 30px; font-weight: 900; letter-spacing: 2.200px; }
.desc { margin-top: 14px; font-size: 28.400px; line-height: 48.300px; color: #383e3e; white-space: nowrap; }
.thead { margin-top: 73px; height: 86px; border-bottom: 3px solid #6e6e75; display: flex; justify-content: space-between; align-items: center; font-size: 28px; font-weight: 900; }
.th-name { display: flex; align-items: center; padding-left: 16px; }
.sort { width: 16px; height: 26px; margin-right: 12px; }
.th-due { display: flex; align-items: center; padding-right: 32px; letter-spacing: .4px; }
.abbr { border-bottom: 2px dotted #1c2424; padding-bottom: 2px; }
.caret { width: 18px; height: 10px; margin-left: 11px; margin-top: 6px; }

.row { height: 126px; border-bottom: 2px solid #6e6e75; display: grid; grid-template-columns: 453px 590px 1fr auto; padding: 0 18px 0 16px; }
.row-first { height: 158px; border-bottom-width: 3px; }
.row-alt { background: #7c7c7c; }
.r-name { align-self: center; font-size: 32px; font-weight: 700; color: #1c2424; }
.r-grade { align-self: center; font-size: 30.500px; font-weight: 400; color: #333a3a; }
.r-rel { padding-top: 26px; font-size: 23px; line-height: 36px; font-weight: 900; letter-spacing: 1.800px; color: #242c2c; }
.r-due { padding-top: 26px; text-align: right; font-size: 23px; line-height: 36px; font-weight: 900; letter-spacing: 1.800px; color: #1c2424; white-space: nowrap; }
.late { letter-spacing: 2.600px; }
.r-due-wide { grid-column: 2 / 5; padding-top: 25px; }
.left-text { font-size: 27px; font-weight: 400; letter-spacing: 0; color: #1c2424; }
.bar { height: 15px; margin: 10px -2px 8px 0; background: #6d6f6e; border-radius: 7px; }

.behind { flex: none; height: 14px; background: #0b0a08; }

/* dock */
.dock { flex: none; height: 128px; margin: 20px 0 0 79px; width: 2701px; display: flex; gap: 27.850px; padding: 18px 0 0 17px; border: 2px solid #6c5639; border-bottom: 0; border-radius: 34px 34px 0 0; background: linear-gradient(180deg, #4c3521, #543a22); }
.app { width: 78px; flex: none; display: flex; flex-direction: column; align-items: center; gap: 18px; }
.app svg { width: 78px; height: 78px; }
.dot { display: block; width: 8px; height: 8px; border-radius: 50%; background: #d7bea4; }
.dot.off { visibility: hidden; }
.dk-o { font: 900 36px "Liberation Sans", sans-serif; fill: #fff; }
.dk-mar { font: 700 17px "Liberation Sans", sans-serif; fill: #fff; }
.dk-19 { font: 300 50px "Lato", sans-serif; fill: #222; }
.dk-badge { font: 400 24px "Liberation Sans", sans-serif; fill: #fff; }
.dk-l { font: 700 34px "Liberation Sans", sans-serif; fill: #fff; }
.dock-sep { display: block; width: 2px; height: 98px; margin: 0 -4px 0 20px; background: #8a7355; }
.app-hid { padding-top: 60px; }
.hid-blue { display: block; width: 88px; height: 20px; background: #2a78b8; border-radius: 6px; }
.hid-black { display: block; width: 30px; height: 20px; background: #111; }
.hid-gray { display: block; width: 50px; height: 20px; background: #707070; border-radius: 16px; }

/* modal */
.modal { position: absolute; left: 928px; top: 300px; width: 1000px; height: 722px; background: #fff; border-radius: 3px; color: #1d2b2b; }
.modal-title { height: 120px; padding-left: 48px; font-size: 48.400px; line-height: 140px; font-weight: 300; color: #1f2d2d; }
.modal-banner { height: 82px; background: #3f7d7b; padding: 0 0 4px 48px; display: flex; align-items: center; color: #fff; font-size: 28.100px; }
.info-ico { width: 24px; height: 24px; margin-right: 16px; }
.modal-body { padding: 32px 48px 0; }
.notice { height: 196px; border: 2px solid #dbe7e5; border-radius: 3px; background: #f1f7f6; padding: 22px 24px; color: #3f7d7b; font-size: 27.900px; line-height: 48px; }
.dl { display: flex; align-items: center; font-weight: 700; }
.dl-ico { width: 26px; height: 26px; margin: -8px 7px 0 0; }
.file-label { margin-top: 35px; font-size: 23px; line-height: 30px; font-weight: 900; letter-spacing: 2px; color: #5b6363; }
.file-row { margin-top: 15px; height: 72px; display: flex; align-items: center; font-size: 28px; color: #2a3333; }
.doc-ico { width: 27px; height: 32px; margin-right: 16px; }
.file-name { width: 153px; padding-bottom: 2px; }
.btn { height: 72px; border-radius: 3px; font-size: 28px; border: 2px solid transparent; padding: 0 0 3px; }
.btn-select { width: 219px; background: #f0f2f6; border-color: #ccd0d8; color: #474f4f; }
.btn-row { margin-top: 20px; display: flex; gap: 20px; }
.btn-upload { width: 231px; background: #b4c7c3; color: #fff; }
.btn-cancel { width: 170px; background: #b0302a; border-color: #9a2a25; color: #fff; }

/* zoom */
.zoombar { position: absolute; left: 607px; top: 1364px; width: 1746px; height: 105px; border-radius: 24px; background: #232323; display: grid; grid-template-columns: 180px 174px 162px 202px 160px 162px 172px 160px 212px 158px; box-shadow: 0 6px 30px rgba(0,0,0,.25); color: #adadad; font-family: "Inter", "Liberation Sans", sans-serif; font-size: 24px; }
.zitem { display: flex; flex-direction: column; align-items: center; padding-top: 13px; white-space: nowrap; line-height: 28px; }
.zi { width: 100%; height: 44px; display: grid; grid-template-columns: 1fr auto 1fr; align-items: center; justify-items: center; margin-bottom: 10px; }
.zi > svg:first-child, .z-part { grid-column: 2; }
.z-chev { grid-column: 3; justify-self: start; width: 16px; height: 10px; margin-left: 42px; }
.z-chev-v { margin-left: 32px; }
.z-chev-p { margin-left: 45px; }
.z-mic { width: 30px; height: 44px; }
.z-vid { width: 48px; height: 30px; }
.z-sec { width: 36px; height: 42px; }
.z-part { display: flex; align-items: center; position: relative; }
.z-ppl { width: 48px; height: 36px; }
.z-num { position: absolute; left: 58px; top: 5px; font-weight: 400; font-size: 23px; }
.z-poll { width: 36px; height: 36px; }
.z-new { width: 48px; height: 36px; }
.z-pause { width: 30px; height: 32px; }
.z-ann { width: 36px; height: 36px; }
.z-mouse { width: 28px; height: 40px; }
.z-more { width: 42px; height: 10px; }
.z-green { color: #62d66a; }

.sharebar { position: absolute; left: 1142px; top: 1469px; width: 676px; height: 45px; display: flex; border-radius: 0 0 18px 18px; overflow: hidden; box-shadow: 0 2px 0 #1d1d1d, 0 8px 24px rgba(0,0,0,.25); font-family: "Inter", "Liberation Sans", sans-serif; font-size: 24px; }
.share-green { width: 480px; background: #62d66a; display: flex; align-items: center; padding: 0 20px 0 11px; color: #1e2a33; }
.share-arrow { width: 22px; height: 28px; }
.share-text { flex: 1; text-align: center; padding-left: 6px; }
.share-shield { width: 20px; height: 24px; }
.share-red { flex: 1; background: #cd3b33; display: flex; align-items: center; color: #fff; padding: 0 0 3px 22px; font-weight: 500; font-size: 22.300px; }
.stop-sq { display: block; width: 16px; height: 16px; margin: 3px 12px 0 0; background: #fff; border-radius: 3px; }

.talk { position: absolute; left: 2372px; top: 1605px; width: 488px; height: 141px; display: flex; flex-direction: column; border-radius: 18px 18px 0 4px; overflow: hidden; box-shadow: 0 2px 0 #111; }
.talk-head { height: 61px; flex: none; background: #111; position: relative; }
.t-blue { position: absolute; left: 36px; top: 37px; width: 24px; height: 6px; background: #5a97f2; border-radius: 1px; }
.t-sq { position: absolute; left: 84px; top: 27px; width: 24px; height: 16px; background: #a8a8a8; border-radius: 1px; }
.t-stack { position: absolute; left: 132px; top: 19px; width: 24px; }
.t-stack i { display: block; height: 10px; margin-bottom: 4px; background: #a8a8a8; border-radius: 2px; }
.talk-body { flex: 1; background: #333e4b; color: #fff; padding: 28px 0 0 44px; font-family: "Inter", "Liberation Sans", sans-serif; font-size: 24px; line-height: 30px; }
```
